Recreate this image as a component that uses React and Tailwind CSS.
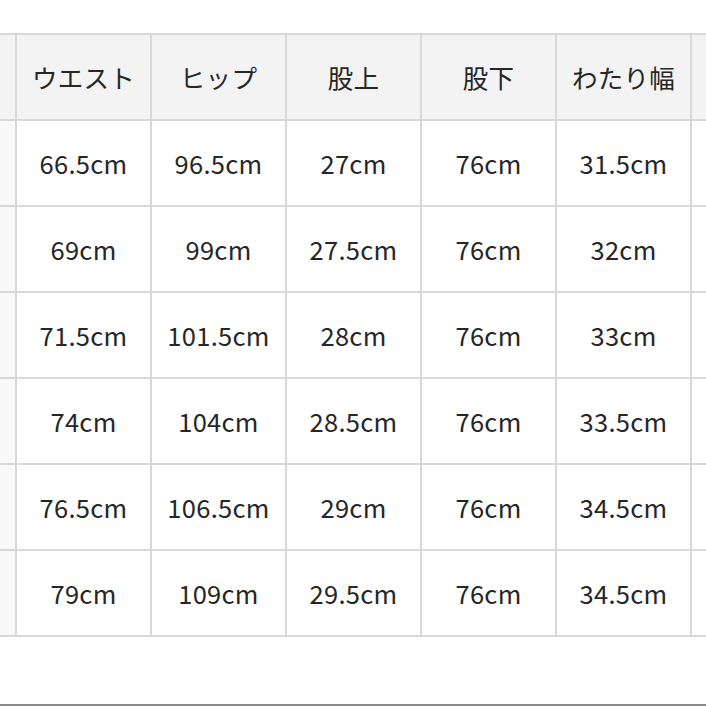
const headers = ["ウエスト", "ヒップ", "股上", "股下", "わたり幅"];

const rows = [
  ["66.5cm", "96.5cm", "27cm", "76cm", "31.5cm"],
  ["69cm", "99cm", "27.5cm", "76cm", "32cm"],
  ["71.5cm", "101.5cm", "28cm", "76cm", "33cm"],
  ["74cm", "104cm", "28.5cm", "76cm", "33.5cm"],
  ["76.5cm", "106.5cm", "29cm", "76cm", "34.5cm"],
  ["79cm", "109cm", "29.5cm", "76cm", "34.5cm"],
];

export default function App() {
  return (
    <div
      className="w-[706px] h-[706px] overflow-hidden bg-white flex flex-col text-[#262626]"
      style={{ fontFamily: '"Noto Sans CJK JP", "Noto Sans", sans-serif' }}
    >
      <div className="mt-[33px] grid grid-cols-[15px_repeat(5,133px)_1fr] auto-rows-[84px] gap-[2px] py-[2px] bg-[#d8d8d8]">
        {/* Header */}
        <div className="bg-[#f3f3f3]" />
        {headers.map((h) => (
          <div key={h} className="bg-[#f3f3f3] flex items-center justify-center text-[25.5px] tracking-[0.3px]">
            {h}
          </div>
        ))}
        <div className="bg-[#f3f3f3]" />

        {/* Body */}
        {rows.map((row, i) => (
          <>
            <div key={"l" + i} className="bg-[#f8f8f8]" />
            {row.map((v, j) => (
              <div key={i + "-" + j} className="bg-white flex items-center justify-center text-[25.5px] tracking-[0.3px]">
                {v}
              </div>
            ))}
            <div key={"r" + i} className="bg-white" />
          </>
        ))}
      </div>
      <div className="flex-1" />
      <div className="h-[2px] bg-[#8a8a8a]" />
    </div>
  );
}
